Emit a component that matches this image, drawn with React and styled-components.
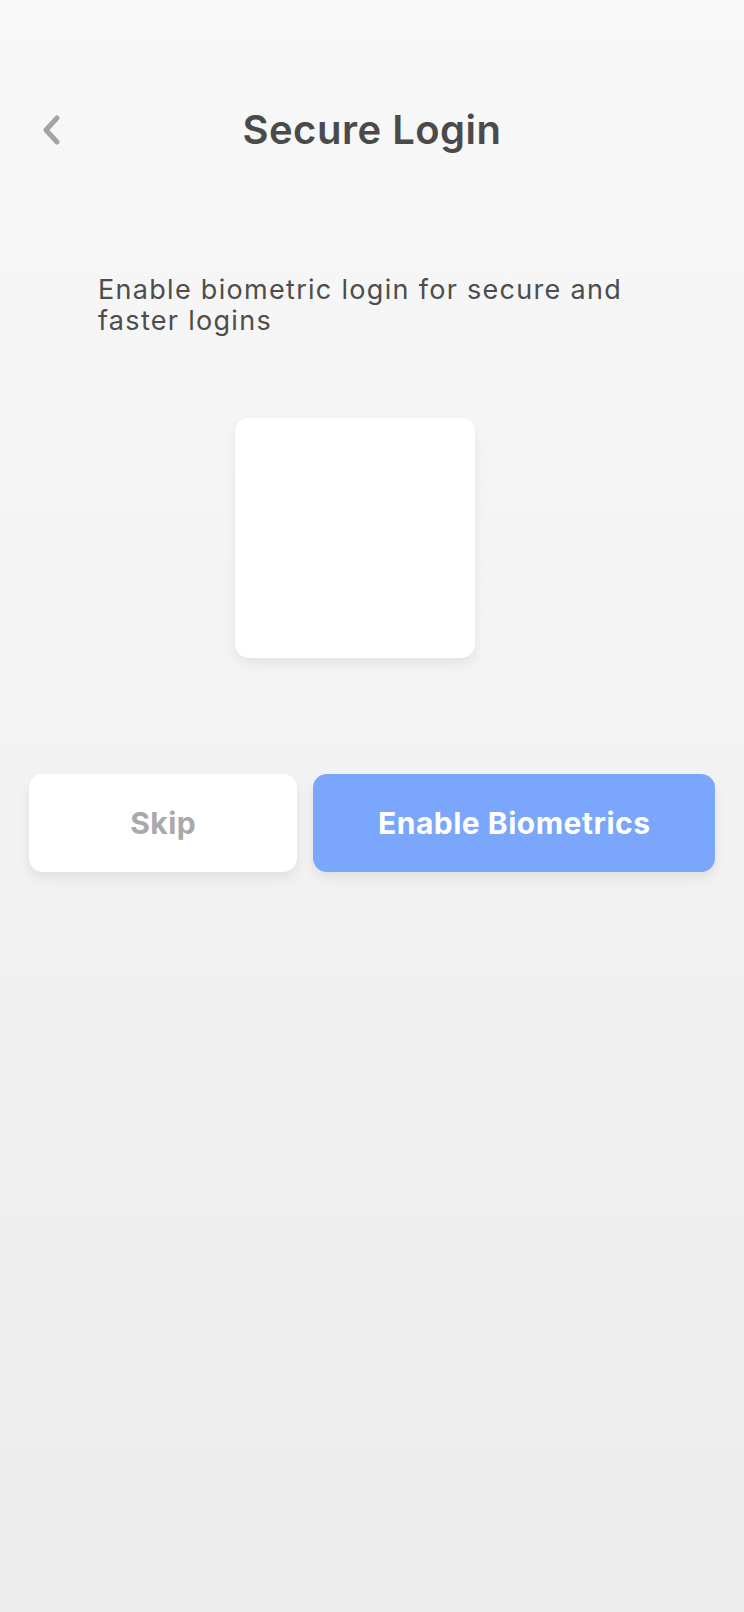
import React from "react";
import styled, { createGlobalStyle } from "styled-components";

const GlobalStyle = createGlobalStyle`
  html, body {
    margin: 0;
    padding: 0;
  }
  body {
    font-family: Inter, "Open Sans", sans-serif;
    background: #ececec;
  }
`;

const Screen = styled.div`
  min-height: 1612px;
  width: 100%;
  display: flex;
  flex-direction: column;
  background: linear-gradient(180deg, #f8f8f8 0%, #ececec 100%);
`;

const Header = styled.div`
  display: flex;
  align-items: center;
  justify-content: center;
  height: 60px;
  margin-top: 99px;
  position: relative;
`;

const BackButton = styled.button`
  position: absolute;
  left: 36px;
  top: 13px;
  width: 30px;
  height: 36px;
  padding: 0;
  border: 0;
  background: transparent;
  display: flex;
  align-items: center;
  justify-content: center;
  cursor: pointer;
`;

const Title = styled.h1`
  margin: 0;
  font-size: 40px;
  font-weight: 600;
  color: #4a4a4a;
  letter-spacing: 0.5px;
`;

const Description = styled.p`
  margin: 115px 0 0 98px;
  width: 560px;
  font-size: 27px;
  line-height: 31px;
  font-weight: 400;
  letter-spacing: 1.3px;
  color: #4d4d4d;
`;

const Card = styled.div`
  width: 240px;
  height: 240px;
  margin: 82px 0 0 235px;
  background: #ffffff;
  border-radius: 14px;
  box-shadow: 0 6px 12px rgba(0, 0, 0, 0.06);
`;

const Actions = styled.div`
  display: flex;
  gap: 16px;
  padding: 0 29px;
  margin-top: 116px;
`;

const ActionButton = styled.button`
  flex: ${(p) => (p.$primary ? 404 : 266)};
  height: 98px;
  border: 0;
  border-radius: 14px;
  background: ${(p) => (p.$primary ? "#7aa6fc" : "#ffffff")};
  color: ${(p) => (p.$primary ? "#ffffff" : "#a9a9a9")};
  font-family: Inter, "Open Sans", sans-serif;
  font-size: 30px;
  font-weight: 700;
  letter-spacing: 0.5px;
  box-shadow: 0 6px 12px rgba(0, 0, 0, 0.07);
  cursor: pointer;
`;

const App = () => {
  return (
    <>
      <GlobalStyle />
      <Screen>
        <Header>
          <BackButton aria-label="Back">
            <svg width="22" height="30" viewBox="0 0 22 30" fill="none">
              <path
                d="M17 3L6 15L17 27"
                stroke="#a3a3a3"
                strokeWidth="5"
                strokeLinecap="round"
                strokeLinejoin="round"
              />
            </svg>
          </BackButton>
          <Title>Secure Login</Title>
        </Header>

        <Description>
          Enable biometric login for secure and faster logins
        </Description>

        <Card />

        <Actions>
          <ActionButton>Skip</ActionButton>
          <ActionButton $primary>Enable Biometrics</ActionButton>
        </Actions>
      </Screen>
    </>
  );
};

export default App;
